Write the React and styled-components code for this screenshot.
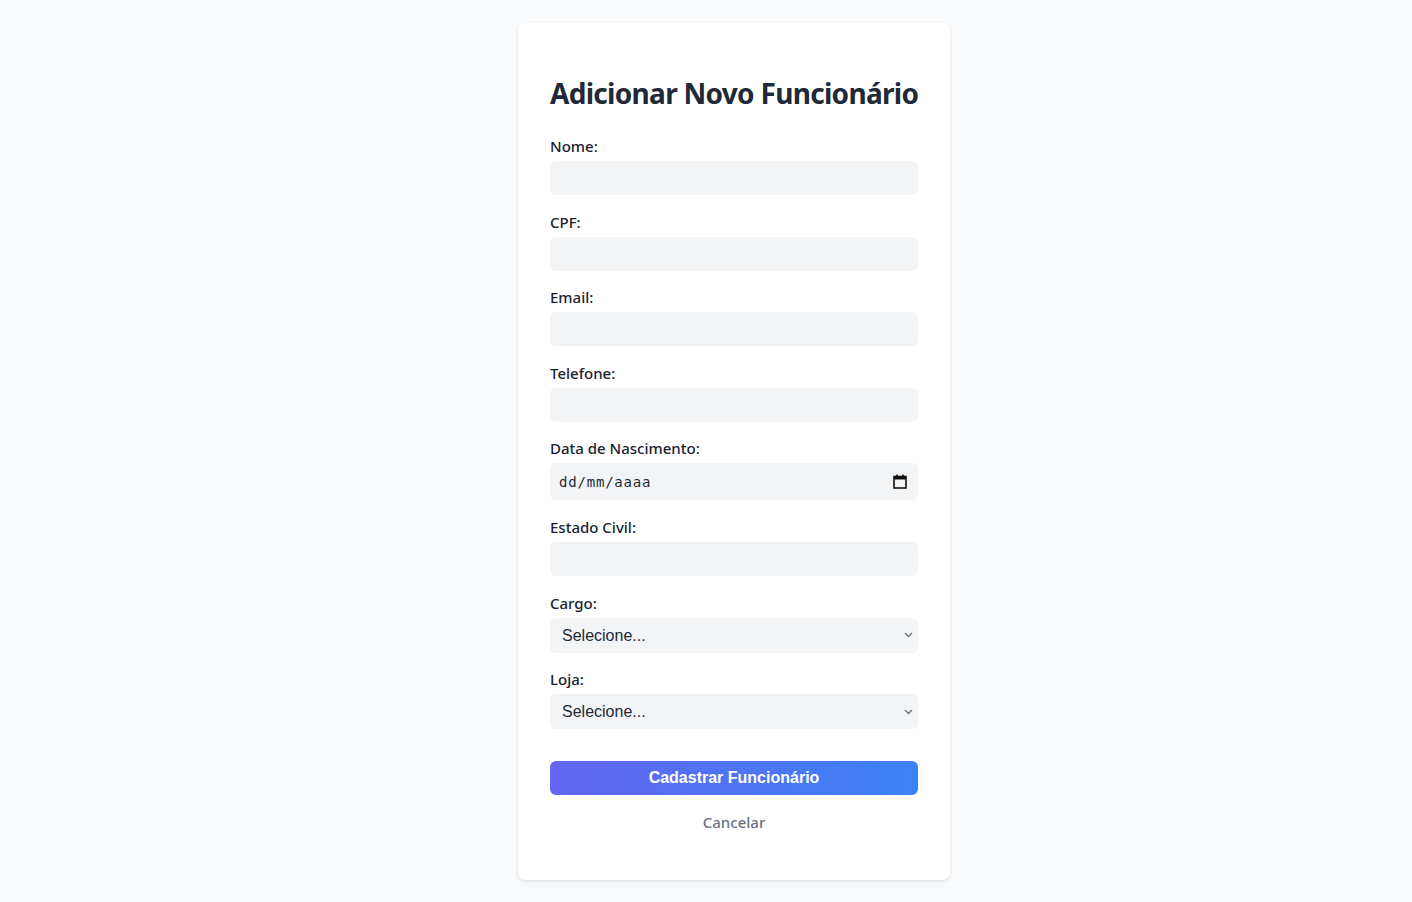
import styled, { createGlobalStyle } from "styled-components";

const GlobalStyle = createGlobalStyle`
  html, body {
    margin: 0;
    padding: 0;
    background: #f9fafb;
  }
  body {
    font-family: "Noto Sans", "Open Sans", sans-serif;
    color: #1f2937;
  }
`

const Page = styled.div`
  min-height: 902px;
  display: flex;
  justify-content: center;
  align-items: flex-start;
  padding-left: 56px;
  box-sizing: border-box;
`

const Card = styled.div`
  width: 432px;
  box-sizing: border-box;
  margin-top: 23px;
  padding: 32px 32px 47px;
  background: #ffffff;
  border-radius: 8px;
  box-shadow: 0 1px 3px rgba(0, 0, 0, 0.08), 0 2px 6px rgba(0, 0, 0, 0.05);
`

const Title = styled.h1`
  margin: 18px 0 23px;
  font-size: 28px;
  line-height: 40px;
  font-weight: 700;
  color: #1f2937;
  white-space: nowrap;
  letter-spacing: -0.7px;
`

const Field = styled.div`
  margin-bottom: 16.6px;
`

const Label = styled.label`
  display: block;
  font-size: 15px;
  line-height: 20px;
  font-weight: 500;
  color: #1a2230;
  margin-bottom: 5px;
`

const Input = styled.input`
  display: block;
  width: 100%;
  height: ${(p) => p.$h || 34}px;
  box-sizing: border-box;
  border: none;
  outline: none;
  border-radius: 6px;
  background: #f3f4f6;
  padding: 0 9px;
  font-size: 14px;
  color: #1f2937;
`

const Wrap = styled.div`
  position: relative;
`

const DateInput = styled(Input)`
  font-family: "DejaVu Sans Mono", "Liberation Mono", monospace;
  font-size: 14px;
  letter-spacing: 0.8px;

  &::placeholder {
    color: #1f2937;
    opacity: 1;
  }
`

const IconSlot = styled.span`
  position: absolute;
  top: 0;
  bottom: 0;
  right: ${(p) => p.$right}px;
  display: flex;
  align-items: center;
  pointer-events: none;
`

const Select = styled.select`
  display: block;
  width: 100%;
  height: 35px;
  box-sizing: border-box;
  border: none;
  outline: none;
  border-radius: 6px;
  background: #f3f4f6;
  padding: 0 12px;
  font-family: "Liberation Sans", Arial, sans-serif;
  font-size: 16px;
  color: #1f2937;
  appearance: none;
  -webkit-appearance: none;
`

const Submit = styled.button`
  display: block;
  width: 100%;
  height: 34px;
  margin-top: 32px;
  border: none;
  border-radius: 6px;
  background: linear-gradient(90deg, #6366f1, #3b82f6);
  color: #ffffff;
  font-family: "Liberation Sans", Arial, sans-serif;
  font-size: 16px;
  font-weight: 700;
  cursor: pointer;
`

const Cancel = styled.button`
  display: block;
  margin: 16px auto 0;
  border: none;
  background: none;
  padding: 0;
  font-family: "Noto Sans", sans-serif;
  font-size: 15px;
  line-height: 22px;
  font-weight: 500;
  color: #6b7280;
  cursor: pointer;
`

const CalendarIcon = () => (
  <svg width="14" height="15" viewBox="0 0 14 15">
    <rect x="1" y="2.5" width="12" height="11.5" fill="none" stroke="#111" strokeWidth="1.6" />
    <rect x="1" y="2.5" width="12" height="3" fill="#111" />
    <rect x="3.2" y="0.5" width="1.6" height="2.5" fill="#111" />
    <rect x="9.2" y="0.5" width="1.6" height="2.5" fill="#111" />
  </svg>
)

const Chevron = () => (
  <svg width="9" height="6" viewBox="0 0 9 6">
    <path d="M1 1l3.5 3.5L8 1" fill="none" stroke="#6b7280" strokeWidth="1.4" />
  </svg>
)

const textFields = ["Nome", "CPF", "Email", "Telefone"]

const App = () => {
  return (
    <Page>
      <GlobalStyle />
      <Card>
        <Title>Adicionar Novo Funcionário</Title>
        {textFields.map((name) => (
          <Field key={name}>
            <Label>{name}:</Label>
            <Input type="text" />
          </Field>
        ))}
        <Field>
          <Label>Data de Nascimento:</Label>
          <Wrap>
            <DateInput type="text" $h={37} placeholder="dd/mm/aaaa" />
            <IconSlot $right={11}>
              <CalendarIcon />
            </IconSlot>
          </Wrap>
        </Field>
        <Field>
          <Label>Estado Civil:</Label>
          <Input type="text" />
        </Field>
        <Field>
          <Label>Cargo:</Label>
          <Wrap>
            <Select defaultValue="">
              <option value="">Selecione...</option>
            </Select>
            <IconSlot $right={5}>
              <Chevron />
            </IconSlot>
          </Wrap>
        </Field>
        <Field>
          <Label>Loja:</Label>
          <Wrap>
            <Select defaultValue="">
              <option value="">Selecione...</option>
            </Select>
            <IconSlot $right={5}>
              <Chevron />
            </IconSlot>
          </Wrap>
        </Field>
        <Submit>Cadastrar Funcionário</Submit>
        <Cancel>Cancelar</Cancel>
      </Card>
    </Page>
  )
}

export default App
